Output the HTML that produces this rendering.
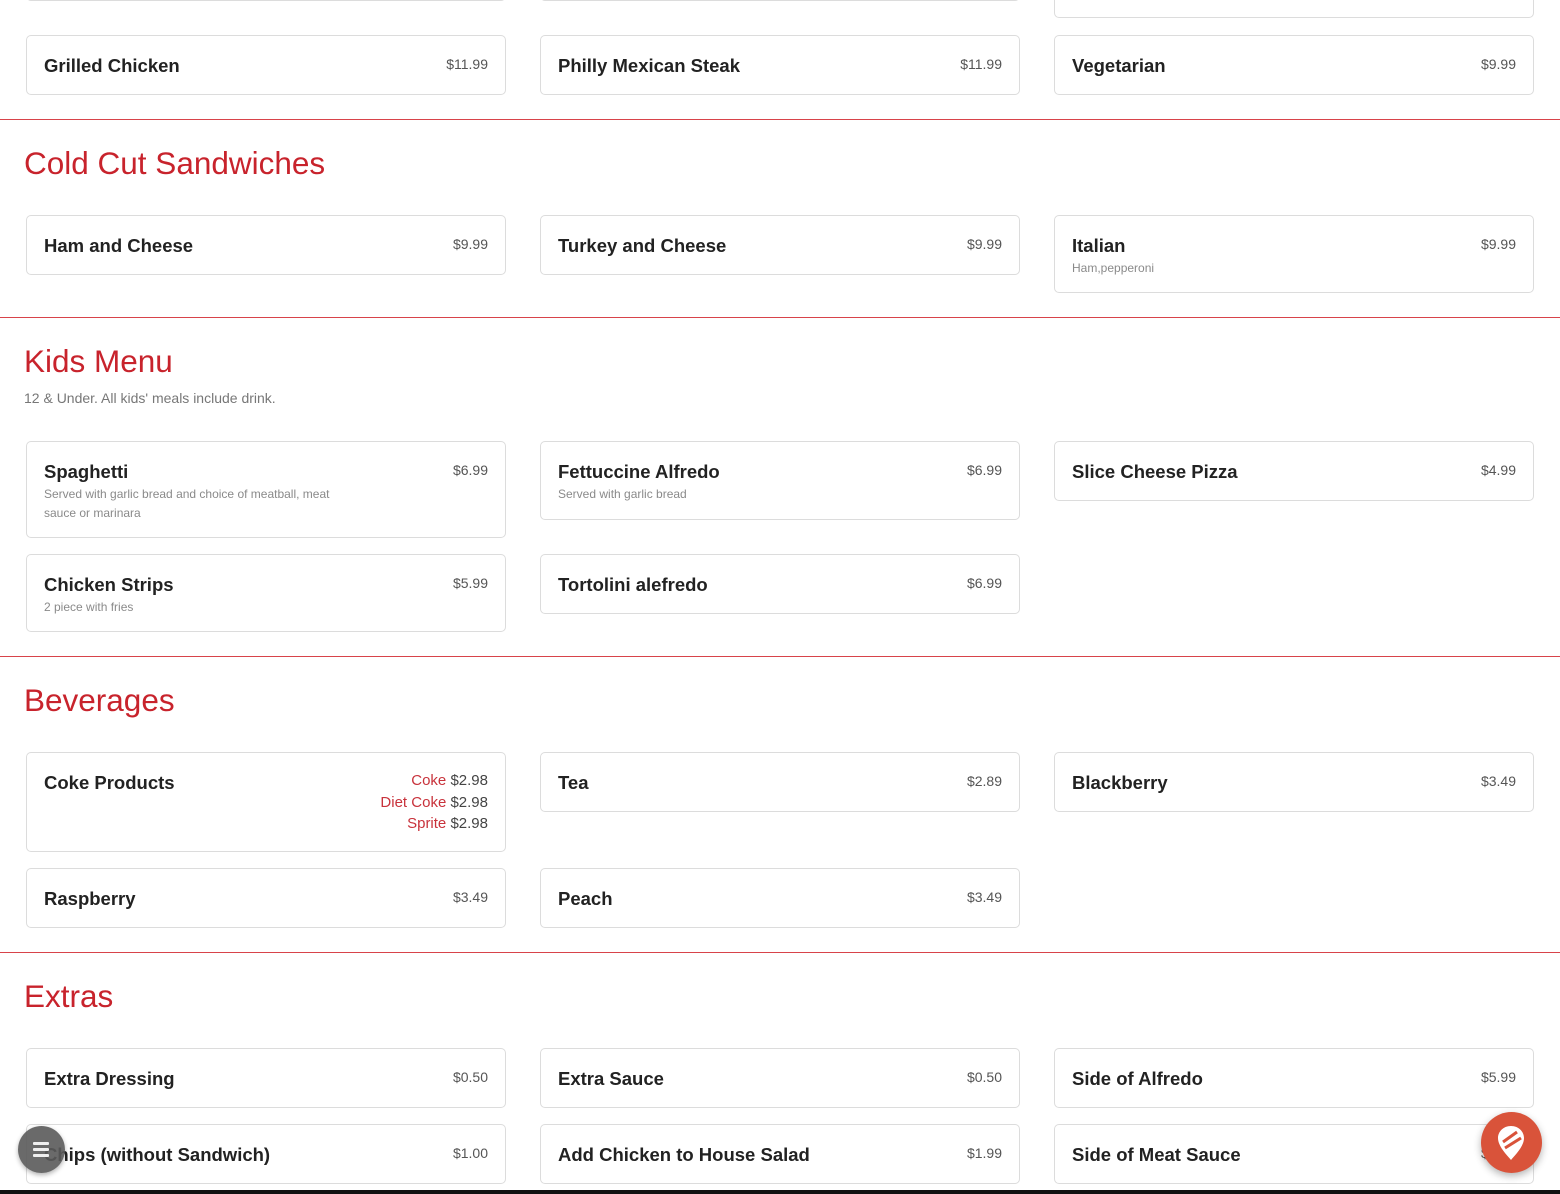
<!DOCTYPE html>
<html><head><meta charset="utf-8">
<style>
*{margin:0;padding:0;box-sizing:border-box}
html,body{width:1560px;height:1194px;overflow:hidden;background:#fff;font-family:"Liberation Sans",Arial,sans-serif;position:relative}
.c{position:absolute;width:480px;border:1px solid #dcdcdc;border-radius:5px;background:#fff;padding:16px 17px 0 17px}
.t{font-size:18.5px;font-weight:bold;color:#222;line-height:26px;margin-top:1px}
.p{position:absolute;right:17px;top:18px;font-size:14px;color:#555;text-align:right;line-height:21.5px}
.p span{color:#c8323b}
.p.m{top:17px;font-size:15px;color:#444}
.d{font-size:12px;color:#8a8a8a;line-height:19px;width:310px}
.line{position:absolute;left:0;width:1560px;height:0;border-top:1px solid #d8434a}
.h{position:absolute;left:24px;font-size:31.5px;color:#c8232c;line-height:36px}
.sub{position:absolute;left:24px;font-size:14px;color:#777}
</style></head><body>

<div class="c" style="left:26px;top:-39px;height:40px"></div>
<div class="c" style="left:540px;top:-39px;height:40px"></div>
<div class="c" style="left:1054px;top:-40px;height:58px"></div>

<div class="c" style="left:26px;top:35px;height:60px"><div class="t">Grilled Chicken</div><div class="p">$11.99</div></div>
<div class="c" style="left:540px;top:35px;height:60px"><div class="t">Philly Mexican Steak</div><div class="p">$11.99</div></div>
<div class="c" style="left:1054px;top:35px;height:60px"><div class="t">Vegetarian</div><div class="p">$9.99</div></div>

<div class="line" style="top:119px"></div>
<div class="h" style="top:145px">Cold Cut Sandwiches</div>
<div class="c" style="left:26px;top:215px;height:60px"><div class="t">Ham and Cheese</div><div class="p">$9.99</div></div>
<div class="c" style="left:540px;top:215px;height:60px"><div class="t">Turkey and Cheese</div><div class="p">$9.99</div></div>
<div class="c" style="left:1054px;top:215px;height:78px"><div class="t">Italian</div><div class="d">Ham,pepperoni</div><div class="p">$9.99</div></div>

<div class="line" style="top:317px"></div>
<div class="h" style="top:343px">Kids Menu</div>
<div class="sub" style="top:390px">12 &amp; Under. All kids' meals include drink.</div>
<div class="c" style="left:26px;top:441px;height:97px"><div class="t">Spaghetti</div><div class="d">Served with garlic bread and choice of meatball, meat sauce or marinara</div><div class="p">$6.99</div></div>
<div class="c" style="left:540px;top:441px;height:79px"><div class="t">Fettuccine Alfredo</div><div class="d">Served with garlic bread</div><div class="p">$6.99</div></div>
<div class="c" style="left:1054px;top:441px;height:60px"><div class="t">Slice Cheese Pizza</div><div class="p">$4.99</div></div>
<div class="c" style="left:26px;top:554px;height:78px"><div class="t">Chicken Strips</div><div class="d">2 piece with fries</div><div class="p">$5.99</div></div>
<div class="c" style="left:540px;top:554px;height:60px"><div class="t">Tortolini alefredo</div><div class="p">$6.99</div></div>

<div class="line" style="top:656px"></div>
<div class="h" style="top:682px">Beverages</div>
<div class="c" style="left:26px;top:752px;height:100px"><div class="t">Coke Products</div><div class="p m"><span>Coke</span> $2.98<br><span>Diet Coke</span> $2.98<br><span>Sprite</span> $2.98</div></div>
<div class="c" style="left:540px;top:752px;height:60px"><div class="t">Tea</div><div class="p">$2.89</div></div>
<div class="c" style="left:1054px;top:752px;height:60px"><div class="t">Blackberry</div><div class="p">$3.49</div></div>
<div class="c" style="left:26px;top:868px;height:60px"><div class="t">Raspberry</div><div class="p">$3.49</div></div>
<div class="c" style="left:540px;top:868px;height:60px"><div class="t">Peach</div><div class="p">$3.49</div></div>

<div class="line" style="top:952px"></div>
<div class="h" style="top:978px">Extras</div>
<div class="c" style="left:26px;top:1048px;height:60px"><div class="t">Extra Dressing</div><div class="p">$0.50</div></div>
<div class="c" style="left:540px;top:1048px;height:60px"><div class="t">Extra Sauce</div><div class="p">$0.50</div></div>
<div class="c" style="left:1054px;top:1048px;height:60px"><div class="t">Side of Alfredo</div><div class="p">$5.99</div></div>
<div class="c" style="left:26px;top:1124px;height:60px"><div class="t">Chips (without Sandwich)</div><div class="p">$1.00</div></div>
<div class="c" style="left:540px;top:1124px;height:60px"><div class="t">Add Chicken to House Salad</div><div class="p">$1.99</div></div>
<div class="c" style="left:1054px;top:1124px;height:60px"><div class="t">Side of Meat Sauce</div><div class="p">$5.99</div></div>

<div style="position:absolute;left:18px;top:1126px;width:47px;height:47px;border-radius:50%;background:rgba(90,90,90,0.9);box-shadow:0 2px 5px rgba(0,0,0,.3)">
 <div style="position:absolute;left:15px;top:16px;width:16px;height:3px;background:#eee;border-radius:1px"></div>
 <div style="position:absolute;left:15px;top:22px;width:16px;height:3px;background:#eee;border-radius:1px"></div>
 <div style="position:absolute;left:15px;top:28px;width:16px;height:3px;background:#eee;border-radius:1px"></div>
</div>

<div style="position:absolute;left:1481px;top:1112px;width:61px;height:61px;border-radius:50%;background:#d9533a;box-shadow:0 3px 8px rgba(0,0,0,.3)">
 <svg width="61" height="61" viewBox="0 0 61 61"><path d="M30 14c-8 0-13 6-13 12 0 9 10 18 13 22 3-4 13-13 13-22 0-6-5-12-13-12z" fill="#fff"/><path d="M22 30l14-10M24 36l16-10" stroke="#d9533a" stroke-width="3"/></svg>
</div>

<div style="position:absolute;left:0;top:1190px;width:1560px;height:4px;background:#111"></div>
</body></html>
